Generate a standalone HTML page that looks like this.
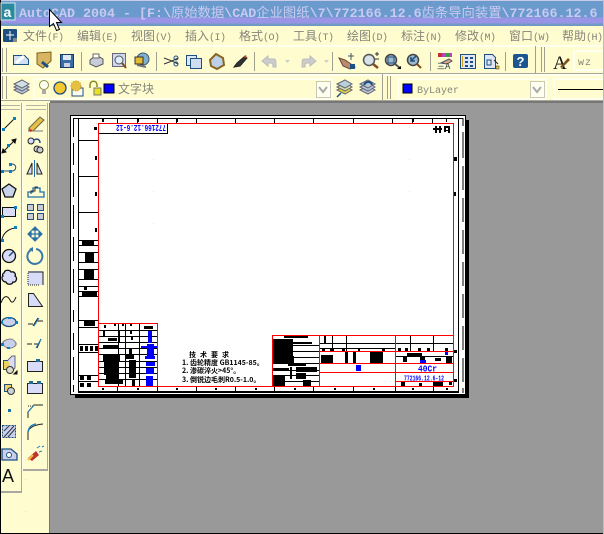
<!DOCTYPE html>
<html><head><meta charset="utf-8">
<style>
html,body{margin:0;padding:0;background:#999}
#r{position:relative;width:604px;height:534px;overflow:hidden;background:#999;font-family:"Liberation Sans","Noto Sans CJK SC",sans-serif}
.a{position:absolute}
#t{left:0;top:0;width:604px;height:26px;background:linear-gradient(#6b9bcd 0,#6b9bcd 16px,#9a94e6 17px,#9a94e6 22px,#6f9ac4 23px,#6f9ac4 26px);border-top:1px solid #c8cce8;box-sizing:border-box}
#tt{left:19px;top:4px;white-space:pre;font:bold 13.33px/16px "Liberation Mono","Noto Sans CJK SC",monospace;color:#c9c9f2}
#tt span{font-family:"Noto Sans CJK SC",sans-serif;font-size:13.33px;font-weight:400;line-height:16px}
#m{left:0;top:26px;width:604px;height:19px;background:#fffdd0;border-bottom:2px solid #fffff0}
.mi{position:absolute;top:2px;font-size:12px;line-height:16px;color:#85857a;white-space:pre;font-family:"Noto Sans CJK SC",sans-serif}
.mi i{font:10px/16px "Liberation Mono",monospace;letter-spacing:-.5px}
svg{position:absolute;left:0;top:0}
</style></head><body><div id="r">
<div class="a" id="t"></div>
<div class="a" id="tt">AutoCAD 2004 - [F:\<span>原始数据</span>\CAD<span>企业图纸</span>\7\772166.12.6<span>齿条导向装置</span>\772166.12.6</div>
<div class="a" id="m">
<span class="mi" style="left:23px">文件<i>(F)</i></span>
<span class="mi" style="left:77px">编辑<i>(E)</i></span>
<span class="mi" style="left:131px">视图<i>(V)</i></span>
<span class="mi" style="left:185px">插入<i>(I)</i></span>
<span class="mi" style="left:239px">格式<i>(O)</i></span>
<span class="mi" style="left:293px">工具<i>(T)</i></span>
<span class="mi" style="left:347px">绘图<i>(D)</i></span>
<span class="mi" style="left:401px">标注<i>(N)</i></span>
<span class="mi" style="left:455px">修改<i>(M)</i></span>
<span class="mi" style="left:509px">窗口<i>(W)</i></span>
<span class="mi" style="left:562px">帮助<i>(H)</i></span>
</div>

<svg width="604" height="534" viewBox="0 0 604 534">
<!-- toolbars bg -->
<rect x="0" y="47" width="604" height="54" fill="#fffdd0"/>
<rect x="0" y="45" width="604" height="2" fill="#fffff0"/>
<rect x="0" y="73" width="604" height="1" fill="#a8a89a"/>
<rect x="0" y="74" width="604" height="2" fill="#fffff0"/>
<rect x="0" y="100" width="604" height="1" fill="#a8a89a"/>
<rect x="0" y="101" width="604" height="2" fill="#fffdd0"/>
<rect x="50" y="101" width="554" height="2" fill="#777"/>
<!-- grippers -->
<g fill="#a0a090">
<rect x="2" y="48" width="1" height="24"/><rect x="6" y="48" width="1" height="24"/>
<rect x="2" y="76" width="1" height="23"/><rect x="6" y="76" width="1" height="23"/>
<rect x="81" y="52" width="1" height="19"/><rect x="156" y="52" width="1" height="19"/><rect x="254" y="52" width="1" height="19"/>
<rect x="332" y="52" width="1" height="19"/><rect x="430" y="52" width="1" height="19"/><rect x="505" y="52" width="1" height="19"/>
<rect x="535" y="46" width="1" height="27"/><rect x="541" y="47" width="1" height="25"/><rect x="544" y="47" width="1" height="25"/>
<rect x="382" y="74" width="1" height="26"/><rect x="387" y="76" width="1" height="23"/><rect x="390" y="76" width="1" height="23"/>
</g>
<!-- combos -->
<g fill="none">
<rect x="34" y="79" width="298" height="20" stroke="#fffff0" stroke-width="2"/>
<rect x="398" y="79" width="148" height="20" stroke="#fffff0" stroke-width="2"/>
<rect x="554" y="79" width="52" height="20" stroke="#fffff0" stroke-width="2"/>
<rect x="574" y="51" width="32" height="19" stroke="#fffff0" stroke-width="2"/>
</g>
<g fill="#fffff0" stroke="#c8c8b4"><rect x="316.500" y="81.500" width="14" height="16"/><rect x="530.500" y="81.500" width="14" height="16"/></g>
<path d="M319 87l4 5 4-5" fill="none" stroke="#aaa" stroke-width="2"/>
<path d="M533 87l4 5 4-5" fill="none" stroke="#aaa" stroke-width="2"/>
<rect x="403" y="84" width="9" height="9" fill="#00f" stroke="#000"/>
<rect x="104" y="84" width="10" height="9" fill="#00f" stroke="#000"/>
<rect x="558" y="89" width="46" height="1" fill="#000"/>
<text x="118" y="93" font-family="Noto Sans CJK SC,sans-serif" font-size="12" fill="#85857a">文字块</text>
<text x="417" y="93" font-family="'Liberation Mono',monospace" font-size="10" fill="#85857a">ByLayer</text>
<text x="578" y="65" font-family="'Liberation Mono',monospace" font-size="10" fill="#85857a" letter-spacing="1">wz</text>

<!-- Toolbar 1 icons -->
<g stroke-width="1">
<path d="M13.500 55.500h11l4 4v5h-15z" fill="#cfe0f4" stroke="#1d4f80"/><path d="M16 63l8-7" stroke="#fff" stroke-width="3"/>
<path d="M37 53l14-1v9l-8 7-6-4z" fill="#d8b560" stroke="#7a6020"/><path d="M42 62l6 5" stroke="#1d4f80" stroke-width="3"/>
<rect x="60.500" y="54.500" width="13" height="13" fill="#3a6da8" stroke="#143a66"/><rect x="63" y="55" width="8" height="5" fill="#dfe8f5"/><rect x="64" y="63" width="6" height="4" fill="#c8d4e4"/>
<path d="M90 60l6-5 7 4v5l-7 3-6-3z" fill="#c8ccd8" stroke="#555"/><rect x="93" y="54" width="6" height="4" fill="#fff" stroke="#666"/>
<rect x="112.500" y="53.500" width="13" height="13" fill="#cfd8ec" stroke="#667"/><circle cx="119" cy="60" r="4" fill="#ddeeff" stroke="#555"/><path d="M122 63l4 5" stroke="#8a4a20" stroke-width="2"/>
<circle cx="143" cy="59" r="6" fill="#7fb0d0" stroke="#456"/><rect x="135" y="57" width="8" height="7" fill="#e6bb30" stroke="#333"/><path d="M137 65l9 2" stroke="#777" stroke-width="2"/>
<path d="M164 58l8 3 6-3M164 64l8-3 6 3" fill="none" stroke="#333"/><circle cx="176" cy="58" r="2" fill="none" stroke="#1d4f80"/><circle cx="176" cy="64" r="2" fill="none" stroke="#1d4f80"/>
<rect x="186.500" y="55.500" width="10" height="10" fill="#dfe6f6" stroke="#1d4f80"/><rect x="190.500" y="58.500" width="11" height="10" fill="#cfdcf2" stroke="#1d4f80"/>
<path d="M210 60l6-6 7 4 1 7-7 4-6-3z" fill="#bcd0e8" stroke="#8a6420" stroke-width="2"/>
<path d="M234 67l3-4 8-7 2 2-7 8z" fill="#333" stroke="#222"/><path d="M243 57l3-2 1 3z" fill="#b05030"/>
<path d="M262 61l6-5v3h6c2 0 2 3 2 8h-3c0-3 0-4-3-4h-2v3z" fill="#ccc" stroke="#bbb"/>
<path d="M285 60h5l-2.500 3z" fill="#ccc"/>
<path d="M316 61l-6-5v3h-6c-2 0-2 3-2 8h3c0-3 0-4 3-4h2v3z" fill="#ccc" stroke="#bbb"/>
<path d="M324 60h5l-2.500 3z" fill="#ccc"/>
<path d="M339 58l6 2 6 4 4 3-5 2-7-3z" fill="#b98a70" stroke="#6a4a38"/><path d="M350 64h5v5h-5z" fill="#1d4f80"/><path d="M351 53v7M348 56h6" stroke="#456"/>
<circle cx="369" cy="60" r="5.500" fill="#d8e0e8" stroke="#555" stroke-width="1.500"/><path d="M373 64l5 4" stroke="#8a4a20" stroke-width="2.500"/><path d="M375 54h4M377 52v4M375 59h4" stroke="#333"/>
<circle cx="391" cy="60" r="5.500" fill="#9fb8cc" stroke="#444" stroke-width="1.500"/><rect x="388" y="57" width="6" height="6" fill="none" stroke="#1d4f80"/><path d="M395 64l5 4" stroke="#555" stroke-width="2"/><path d="M397 69l4-3v3z" fill="#000"/>
<circle cx="413" cy="60" r="5.500" fill="#9fb8cc" stroke="#444" stroke-width="1.500"/><path d="M416 56l-5 5M411 57v4h4" stroke="#1d4f80" stroke-width="1.500" fill="none"/><path d="M417 64l4 4" stroke="#8a4a20" stroke-width="2"/>
<rect x="438" y="53" width="14" height="4" fill="#c040c0"/><rect x="438" y="53" width="4" height="4" fill="#c03030"/><rect x="446" y="53" width="4" height="4" fill="#30a040"/><path d="M441 63l8-4 3 2-5 3z" fill="#d8a890" stroke="#555"/><text x="437" y="69" font-size="8" fill="#234">三A</text>
<rect x="460.500" y="54.500" width="15" height="14" fill="#dfe6f6" stroke="#1d4f80"/><g fill="#1d4f80"><rect x="465" y="57" width="3" height="2"/><rect x="470" y="57" width="3" height="2"/><rect x="465" y="61" width="3" height="2"/><rect x="470" y="61" width="3" height="2"/><rect x="465" y="65" width="3" height="2"/><rect x="470" y="65" width="3" height="2"/></g><rect x="462" y="56" width="1" height="11" fill="#d0a020"/>
<path d="M484.500 54.500h8l3 3v11h-11z" fill="#dfe6f6" stroke="#1d4f80"/><rect x="487" y="60" width="4" height="5" fill="none" stroke="#1d4f80"/><path d="M494 60l4 4" stroke="#222"/><rect x="496" y="66" width="3" height="3" fill="#e8d040" stroke="#222" stroke-width=".5"/>
<rect x="513" y="54" width="15" height="14" rx="2" fill="#1d5590"/><text x="516.500" y="66" font-size="13" font-weight="bold" font-family="Liberation Sans,sans-serif" fill="#fff">?</text>
<text x="553" y="69" font-size="19" font-family="Liberation Serif,serif" fill="#111">A</text><path d="M560 67l8-9 2 2-8 8z" fill="#7a5020"/>
<!-- layer row -->
<g stroke="#667" fill="#b8c8d8"><path d="M14 90l8-4 7 4-7 4z"/><path d="M14 87l8-4 7 4-7 4z"/><path d="M14 84l8-4 7 4-7 4z" fill="#d0e0e4"/></g>
<circle cx="44" cy="85" r="4.500" fill="#fffff0" stroke="#8a8a50"/><rect x="42" y="90" width="4" height="4" fill="#aaa"/>
<circle cx="60" cy="88" r="6" fill="#f4c830" stroke="#1d4f80" stroke-width="1.300"/>
<rect x="72" y="88" width="11" height="8" fill="#fffff0" stroke="#1d4f80"/><circle cx="76" cy="86" r="5" fill="#e8c040" stroke="#c8a030" stroke-dasharray="1.500 1"/>
<path d="M90 88v-3c0-5 7-5 7 0v2" fill="none" stroke="#8a8a20" stroke-width="1.500"/><rect x="94" y="88" width="7" height="7" fill="#e8e020" stroke="#777"/>
<g stroke="#667" fill="#e8d840"><path d="M337 90l8-4 7 4-7 4z"/><path d="M337 87l8-4 7 4-7 4z" fill="#d8e0a0"/><path d="M337 84l8-4 7 4-7 4z" fill="#b8d0d8"/></g><path d="M337 97l4-4" stroke="#1d4f80" stroke-width="1.500"/>
<g stroke="#667" fill="#b8c8d8"><path d="M360 90l8-4 7 4-7 4z"/><path d="M360 87l8-4 7 4-7 4z"/><path d="M360 84l8-4 7 4-7 4z"/></g><path d="M364 85c2-4 7-4 8 0" fill="none" stroke="#1d4f80" stroke-width="2"/>

<!-- Left panel -->
<rect x="0" y="103" width="50" height="431" fill="#fffdd0"/>
<rect x="49" y="103" width="1" height="431" fill="#777"/>
<rect x="21" y="103" width="1" height="390" fill="#a8a8a0"/>
<rect x="22" y="103" width="1" height="368" fill="#fffff0"/>
<rect x="47" y="103" width="1" height="368" fill="#a8a8a0"/>
<rect x="0" y="491" width="22" height="2" fill="#a8a8a0"/>
<rect x="23" y="469" width="25" height="2" fill="#a8a8a0"/>
<g fill="#b4b4a4"><rect x="0" y="105" width="20" height="1"/><rect x="0" y="109" width="20" height="1"/><rect x="26" y="105" width="20" height="1"/><rect x="26" y="109" width="20" height="1"/></g>
<!-- col1 -->
<g stroke="#111" fill="none">
<path d="M3 130L15 118"/><rect x="2" y="128" width="3" height="3" fill="#0a80c0" stroke="none"/><rect x="13" y="117" width="3" height="3" fill="#0a80c0" stroke="none"/>
<path d="M2 153L16 139"/><rect x="7" y="144" width="3" height="3" fill="#0a80c0" stroke="none"/><path d="M2 153l1-4 3 3zM16 139l-4 1 3 3z" fill="#111"/>
<path d="M3 171h9c5 0 5-7 0-7h-2" stroke="#1d4f80"/><rect x="1" y="170" width="3" height="3" fill="#0a80c0" stroke="none"/><rect x="9" y="170" width="3" height="3" fill="#0a80c0" stroke="none"/><rect x="9" y="163" width="3" height="3" fill="#0a80c0" stroke="none"/>
<path d="M9 184l7 5-3 8H5l-3-8z" fill="#c8d4ec" stroke="#111" stroke-width="1.300"/>
<rect x="2.500" y="207.500" width="13" height="9" fill="#d8dcf8" stroke="#111"/><rect x="1" y="215" width="3" height="3" fill="#0a80c0" stroke="none"/><rect x="14" y="206" width="3" height="3" fill="#0a80c0" stroke="none"/>
<path d="M2 241c0-7 6-12 13-13" stroke="#111"/><rect x="1" y="239" width="3" height="3" fill="#0a80c0" stroke="none"/><rect x="14" y="226" width="3" height="3" fill="#0a80c0" stroke="none"/>
<circle cx="9" cy="256" r="6.500" fill="#d8dcf8" stroke="#111" stroke-width="1.300"/><path d="M9 256l4-4" stroke="#1d4f80" stroke-width="1.500"/>
<path d="M4 273c1-4 6-3 7-1 4-1 5 3 4 4 3 2 1 7-2 6-1 3-6 3-7 0-4 0-5-5-3-6-1-1 0-3 1-3z" fill="#d8dcf8" stroke="#111" stroke-width="1.300"/>
<path d="M1 303c3-9 7-7 9-3s4 2 6-3"/>
<ellipse cx="9" cy="322" rx="7" ry="4.500" fill="#c8d0ec" stroke="#1d4f80" stroke-width="1.300"/><rect x="0" y="321" width="3" height="3" fill="#0a80c0" stroke="none"/><rect x="15" y="321" width="3" height="3" fill="#0a80c0" stroke="none"/><rect x="8" y="317" width="3" height="2" fill="#0a80c0" stroke="none"/>
<path d="M3 346c-3-7 10-9 13-3 1 3-3 5-7 5" stroke="#667"/><path d="M3 345c-1-4 4-6 8-6 4 1 6 5 4 7-2 2-6 3-8 2z" fill="#c8d0ec" stroke="#888"/><rect x="1" y="343" width="3" height="3" fill="#0a80c0" stroke="none"/><rect x="7" y="347" width="3" height="2" fill="#0a80c0" stroke="none"/>
<rect x="3.500" y="360.500" width="9" height="9" fill="#ecd060" stroke="#1d4f80"/><path d="M8 360l4-4h3v12l-3 4" fill="#d8dcf8" stroke="#667"/><circle cx="10" cy="370" r="3.500" fill="#d8dcc8" stroke="#333"/><path d="M14 374l3-3v3z" fill="#000"/>
<rect x="4.500" y="384.500" width="7" height="7" fill="#ecd060" stroke="#1d4f80"/><circle cx="11" cy="391" r="3.500" fill="#c8d0d8" stroke="#333"/>
<rect x="8" y="409" width="3" height="3" fill="#1d6fa0" stroke="none"/>
<rect x="2.500" y="425.500" width="13" height="12" fill="#c8d0ec" stroke="#1d4f80" stroke-dasharray="2 1"/><path d="M4 437l10-11M8 437l7-8M4 431l5-5" stroke="#334"/>
<path d="M2 449h9l6 5v6H2z" fill="#c8d0ec" stroke="#1d4f80" stroke-width="1.300"/><circle cx="9" cy="455" r="2.500" fill="#fffff0" stroke="#1d4f80"/>
</g>
<text x="2" y="482" font-size="18" font-family="Liberation Sans,sans-serif" fill="#111">A</text>
<!-- col2 -->
<g stroke="#111" fill="none">
<path d="M29 128l11-11 4 3-11 11h-4z" fill="#e8c040" stroke="#665"/><path d="M28 131h15" stroke="#777"/><path d="M29 128l4 3-3 1z" fill="#c03030" stroke="none"/>
<circle cx="31" cy="141" r="3" fill="#d8dcf8" stroke="#222"/><circle cx="37" cy="149" r="3" fill="#ccc" stroke="#222"/><circle cx="40" cy="150" r="3" fill="#ccc" stroke="#222"/><path d="M34 140c4-2 6 0 6 3" stroke="#1d4f80" stroke-width="1.500"/>
<path d="M34.500 160v17" stroke="#1d6fb0"/><path d="M32 163v11h-5zM37 163v11h5z" fill="#d8dcf8" stroke="#222"/>
<path d="M28 197v-5h5v-4h7v4h4v5z" fill="none" stroke="#1d6fb0" stroke-width="1.300"/><path d="M31 194v-3h4v-4h3" stroke="#333"/>
<g fill="#c8ccd8" stroke="#1d4f80"><rect x="27.500" y="204.500" width="6" height="6"/><rect x="37.500" y="204.500" width="6" height="6"/><rect x="27.500" y="213.500" width="6" height="6"/><rect x="37.500" y="213.500" width="6" height="6"/></g>
<path d="M28 234h14M35 227v14M28 234l3-3v6zM42 234l-3-3v6zM35 227l-3 3h6zM35 241l-3-3h6z" stroke="#2a70a8" stroke-width="1.200" fill="#2a70a8"/>
<path d="M31 250a7.500 7.500 0 1 0 5-1" stroke="#3a78a8" stroke-width="2"/><path d="M29 249l4-2v5z" fill="#3a78a8" stroke="none"/>
<rect x="28" y="271" width="15" height="14" fill="#d8dcf8" stroke="none"/><path d="M28 272h15v13" stroke="#222"/><path d="M28 273v12h12" stroke="#222" stroke-dasharray="1 1"/>
<path d="M28.500 293.500h5l9 13h-14z" fill="#d8dcf8" stroke="#222"/>
<path d="M28 324h5M38 318l-5 8M37 321h6" stroke="#222"/><path d="M34 326l5-8" stroke="#1d80c0"/>
<path d="M27 344h5M34 344h4M41 339l-4 9" stroke="#222"/><path d="M36 348l5-9" stroke="#1d80c0"/>
<rect x="27.500" y="361.500" width="15" height="10" fill="#d8dcf8" stroke="#222"/><rect x="36" y="359" width="4" height="3" fill="#1d6fa0" stroke="none"/>
<rect x="27.500" y="383.500" width="15" height="10" fill="#d8dcf8" stroke="#222"/><rect x="29" y="381" width="4" height="3" fill="#1d6fa0" stroke="none"/><rect x="37" y="381" width="4" height="3" fill="#1d6fa0" stroke="none"/>
<path d="M28 418v-6l6-7h9" stroke="#222"/><path d="M28 406h6" stroke="#222" stroke-dasharray="1 1"/><path d="M28 412l6-7" stroke="#1d80c0"/>
<path d="M28 440v-8c1-4 5-7 15-8" stroke="#222"/><path d="M28 432c1-5 3-7 8-8" stroke="#1d80c0" stroke-width="1.500"/>
<path d="M28 458l8-7 3 4-7 6z" fill="#c03030" stroke="none"/><path d="M28 460l5-5" stroke="#e8c040" stroke-width="2"/><path d="M37 448l3-2M42 447l2-1M39 452l3-1" stroke="#1d80c0"/>
</g>
<g fill="#e8e8c8"><rect x="25" y="479" width="1" height="1"/><rect x="25" y="511" width="1" height="1"/></g>

<!-- window edges -->
<rect x="0" y="0" width="1" height="534" fill="#000"/>
<rect x="0" y="533" width="604" height="1" fill="#000"/>
<rect x="603" y="0" width="1" height="534" fill="#bbb"/>

<!-- App icons -->
<rect x="1" y="3" width="14" height="17" fill="#2c8aa0" stroke="#d0e8f0"/>
<text x="3.500" y="17" font-size="14" font-weight="bold" font-family="Liberation Sans,sans-serif" fill="#fff">a</text>
<rect x="3" y="29" width="14" height="13" rx="1" fill="#1d4f80"/><path d="M10 31v9M6 35h8" stroke="#fff"/><rect x="13" y="38" width="4" height="4" fill="#888"/>

<!-- SHEET -->
<g shape-rendering="crispEdges">
<rect x="75" y="120" width="394" height="278" fill="#000"/>
<rect x="70.500" y="115.500" width="395" height="279" fill="#fff" stroke="#000" stroke-width="1"/>
<rect x="73" y="118" width="390" height="1" fill="#000"/>
<rect x="78" y="391" width="380" height="2" fill="#000"/>
<rect x="78" y="118" width="1" height="275" fill="#000"/>
<rect x="458" y="118" width="1" height="275" fill="#000"/>
<!-- left/right dashes -->
<path d="M73.500 118V137M73.500 143V165M73.500 173V197M73.500 205V229M73.500 237V261M73.500 269V293M73.500 310V322M73.500 333V350M73.500 357V380M73.500 385V392" stroke="#000" stroke-width="1" fill="none"/>
<path d="M463 118V126M463 132V158M463 166V190M463 198V222M463 230V254M463 262V286M463 294V318M463 326V350M463 358V382M463 388V393" stroke="#000" stroke-width="1" fill="none"/>
<g fill="#000">
<!-- left col horizontals -->
<rect x="79" y="140" width="20" height="1"/><rect x="79" y="176" width="20" height="1"/><rect x="79" y="212" width="20" height="1"/>
<rect x="79" y="240" width="20" height="1"/><rect x="79" y="245" width="20" height="1"/><rect x="82" y="241" width="12" height="5"/>
<rect x="79" y="252" width="20" height="1"/><rect x="79" y="262" width="20" height="1"/><rect x="85" y="253" width="9" height="9"/>
<rect x="79" y="269" width="20" height="1"/><rect x="79" y="279" width="20" height="1"/><rect x="84" y="270" width="10" height="9"/>
<rect x="79" y="286" width="20" height="1"/><rect x="79" y="291" width="20" height="1"/><rect x="79" y="296" width="20" height="1"/><rect x="82" y="291" width="15" height="5"/><rect x="84" y="287" width="3" height="3"/>
<rect x="79" y="320" width="20" height="1"/><rect x="79" y="327" width="20" height="1"/><rect x="79" y="344" width="20" height="1"/><rect x="79" y="352" width="20" height="1"/><rect x="79" y="375" width="20" height="1"/><rect x="79" y="381" width="20" height="1"/>
<rect x="84" y="321" width="11" height="5"/>
<rect x="80" y="346" width="3" height="5"/><rect x="85" y="346" width="3" height="5"/><rect x="90" y="346" width="3" height="5"/><rect x="95" y="346" width="3" height="5"/>
<rect x="80" y="376" width="4" height="4"/><rect x="87" y="376" width="4" height="4"/><rect x="80" y="383" width="4" height="4"/><rect x="87" y="383" width="4" height="4"/>
<rect x="95" y="156" width="2" height="4"/><rect x="95" y="192" width="2" height="4"/><rect x="95" y="228" width="2" height="4"/><rect x="454" y="157" width="3" height="4"/><rect x="94" y="127" width="3" height="3"/><rect x="454" y="192" width="2" height="4"/><rect x="454" y="350" width="3" height="3"/><rect x="454" y="379" width="3" height="3"/>
<!-- top ticks -->
<rect x="117" y="119" width="1" height="4"/><rect x="137" y="119" width="1" height="4"/><rect x="157" y="119" width="1" height="4"/><rect x="176" y="119" width="1" height="4"/><rect x="196" y="119" width="1" height="4"/><rect x="235" y="119" width="1" height="4"/><rect x="274" y="119" width="1" height="4"/><rect x="313" y="119" width="1" height="4"/><rect x="353" y="119" width="1" height="4"/><rect x="392" y="119" width="1" height="4"/><rect x="412" y="119" width="1" height="4"/><rect x="432" y="119" width="1" height="4"/><rect x="446" y="119" width="1" height="3"/>
<!-- bottom ticks -->
<rect x="117" y="387" width="1" height="4"/><rect x="157" y="387" width="1" height="4"/><rect x="196" y="387" width="1" height="4"/><rect x="235" y="387" width="1" height="4"/><rect x="274" y="387" width="1" height="4"/><rect x="313" y="387" width="1" height="4"/><rect x="353" y="387" width="1" height="4"/><rect x="395" y="387" width="1" height="4"/><rect x="433" y="387" width="1" height="4"/>
<rect x="102" y="119" width="2" height="3"/><rect x="137" y="119" width="2" height="3"/><rect x="176" y="119" width="2" height="3"/><rect x="412" y="119" width="2" height="3"/><rect x="102" y="388" width="2" height="2"/><rect x="137" y="388" width="2" height="2"/><rect x="176" y="388" width="2" height="2"/><rect x="215" y="388" width="2" height="2"/><rect x="255" y="388" width="2" height="2"/><rect x="294" y="388" width="2" height="2"/><rect x="334" y="388" width="2" height="2"/><rect x="373" y="388" width="2" height="2"/><rect x="412" y="388" width="2" height="2"/><rect x="446" y="388" width="2" height="2"/>
<!-- top-right mark -->
<rect x="433" y="128" width="9" height="2"/><rect x="435" y="126" width="2" height="7"/><rect x="439" y="126" width="2" height="7"/><rect x="444" y="126" width="6" height="2"/><rect x="444" y="126" width="2" height="6"/><rect x="448" y="126" width="2" height="7"/><rect x="445" y="130" width="4" height="1"/>
<!-- title stamp box -->
<rect x="167" y="123" width="1" height="11"/><rect x="99" y="133" width="69" height="1"/>
<!-- parts table -->
<rect x="99" y="330" width="58" height="1"/><rect x="99" y="336" width="58" height="1"/><rect x="99" y="342" width="58" height="1"/><rect x="99" y="348" width="58" height="1"/><rect x="99" y="354" width="58" height="1"/><rect x="99" y="361" width="58" height="1"/><rect x="99" y="367" width="58" height="1"/><rect x="99" y="373" width="58" height="1"/><rect x="99" y="379" width="58" height="1"/>
<rect x="118" y="323" width="1" height="63"/><rect x="125" y="323" width="1" height="63"/><rect x="139" y="323" width="1" height="63"/>
<rect x="103" y="355" width="17" height="6"/><rect x="104" y="361" width="14" height="14"/><rect x="106" y="375" width="12" height="4"/><rect x="103" y="345" width="15" height="3"/>
<rect x="104" y="325" width="2" height="3"/><rect x="114" y="323" width="2" height="3"/><rect x="122" y="323" width="2" height="3"/><rect x="130" y="323" width="2" height="3"/>
<rect x="103" y="330" width="2" height="6"/><rect x="118" y="330" width="2" height="12"/><rect x="108" y="338" width="9" height="3"/><rect x="126" y="355" width="8" height="4"/><rect x="129" y="348" width="3" height="7"/><rect x="129" y="360" width="7" height="18"/><rect x="132" y="380" width="3" height="6"/><rect x="130" y="331" width="2" height="3"/><rect x="131" y="337" width="2" height="3"/><rect x="105" y="380" width="18" height="4"/>
<g fill="#00f"><rect x="148" y="331" width="4" height="12"/><rect x="141" y="346" width="16" height="2"/><rect x="147" y="344" width="7" height="14"/><rect x="145" y="356" width="10" height="3"/><rect x="146" y="362" width="9" height="4"/><rect x="146" y="368" width="8" height="6"/><rect x="146" y="376" width="7" height="10"/></g><rect x="144" y="326" width="9" height="3"/>
<!-- title block -->
<rect x="272" y="339" width="21" height="3"/><rect x="272" y="342" width="40" height="2"/><rect x="273" y="344" width="20" height="20"/>
<rect x="293" y="345" width="26" height="1"/><rect x="293" y="351" width="26" height="1"/><rect x="293" y="357" width="26" height="1"/><rect x="293" y="363" width="26" height="1"/><rect x="272" y="370" width="47" height="1"/><rect x="272" y="375" width="47" height="1"/><rect x="272" y="381" width="47" height="1"/>
<rect x="273" y="368" width="16" height="3"/><rect x="290" y="367" width="2" height="12"/><rect x="296" y="367" width="21" height="5"/><rect x="296" y="373" width="10" height="6"/><rect x="273" y="376" width="12" height="10"/><rect x="284" y="356" width="10" height="8"/><rect x="303" y="380" width="8" height="6"/>
<rect x="284" y="336" width="24" height="2"/><rect x="288" y="364" width="18" height="2"/>
<rect x="319" y="343" width="134" height="1"/><rect x="319" y="348" width="76" height="1"/><rect x="395" y="351" width="58" height="1"/><rect x="395" y="356" width="58" height="1"/>
<rect x="332" y="335" width="1" height="16"/><rect x="346" y="335" width="1" height="16"/><rect x="410" y="335" width="1" height="16"/><rect x="433" y="335" width="1" height="16"/>
<rect x="321" y="355" width="12" height="8"/><rect x="345" y="352" width="3" height="11"/><rect x="353" y="352" width="3" height="11"/><rect x="370" y="352" width="13" height="11"/><rect x="324" y="336" width="2" height="7"/>
<rect x="322" y="348" width="3" height="3"/><rect x="330" y="348" width="4" height="3"/><rect x="342" y="348" width="3" height="3"/><rect x="358" y="348" width="2" height="3"/><rect x="382" y="348" width="3" height="3"/><rect x="398" y="348" width="3" height="3"/><rect x="405" y="348" width="3" height="3"/><rect x="418" y="348" width="3" height="3"/><rect x="427" y="348" width="3" height="3"/><rect x="445" y="348" width="3" height="3"/>
<rect x="407" y="353" width="15" height="3"/><rect x="403" y="357" width="4" height="5"/><rect x="420" y="357" width="5" height="3"/><rect x="435" y="358" width="6" height="3"/><rect x="446" y="357" width="6" height="6"/>
<rect x="401" y="382" width="4" height="4"/><rect x="419" y="383" width="3" height="3"/><rect x="433" y="382" width="10" height="4"/><rect x="449" y="382" width="3" height="3"/>
<g fill="#00f"><rect x="356" y="365" width="5" height="6"/><rect x="420" y="360" width="6" height="3"/><rect x="445" y="352" width="3" height="3"/></g>
<!-- red -->
<g fill="#f00">
<rect x="98" y="123" width="356" height="1"/><rect x="98" y="123" width="1" height="264"/><rect x="453" y="123" width="1" height="264"/><rect x="98" y="386" width="356" height="1"/>
<rect x="99" y="323" width="58" height="1"/><rect x="157" y="323" width="1" height="63"/>
<rect x="272" y="335" width="181" height="1"/><rect x="272" y="335" width="1" height="51"/><rect x="319" y="335" width="1" height="51"/><rect x="395" y="335" width="1" height="51"/>
<rect x="319" y="351" width="134" height="1"/><rect x="319" y="363" width="134" height="1"/><rect x="319" y="372" width="134" height="1"/><rect x="395" y="381" width="58" height="1"/>
</g>
<g fill="#e0e0e0"><rect x="153" y="159" width="1" height="1"/><rect x="153" y="191" width="1" height="1"/><rect x="153" y="223" width="1" height="1"/><rect x="409" y="127" width="1" height="1"/><rect x="409" y="159" width="1" height="1"/><rect x="409" y="191" width="1" height="1"/></g>
</g>
</g>
<text transform="translate(166 125) scale(-1 -1)" x="0" y="0" font-family="'Liberation Mono',monospace" font-weight="bold" font-size="9" fill="#00f" textLength="50" lengthAdjust="spacingAndGlyphs">772166.12.6-12</text>
<text x="404" y="380.500" font-family="'Liberation Mono',monospace" font-weight="bold" font-size="7.500" fill="#00f" textLength="40" lengthAdjust="spacingAndGlyphs">772166.12.6-12</text>
<text x="418" y="371.500" font-family="'Liberation Mono',monospace" font-weight="bold" font-size="9" fill="#00f" textLength="19" lengthAdjust="spacingAndGlyphs">40Cr</text>
<g font-family="Noto Sans CJK SC,sans-serif" font-weight="bold" font-size="7" fill="#000">
<text x="189" y="357" letter-spacing="4">技术要求</text>
<text x="182" y="365">1. 齿轮精度 GB1145-85。</text>
<text x="182" y="373">2. 渗碳淬火&gt;45°。</text>
<text x="182" y="382">3. 倒锐边毛刺R0.5-1.0。</text>
</g>
<!-- cursor -->
<path d="M49.500 9.500v17l4-3 3 7 3-1-3-7h5z" fill="#fff" stroke="#000"/>
</svg>
</div></body></html>
